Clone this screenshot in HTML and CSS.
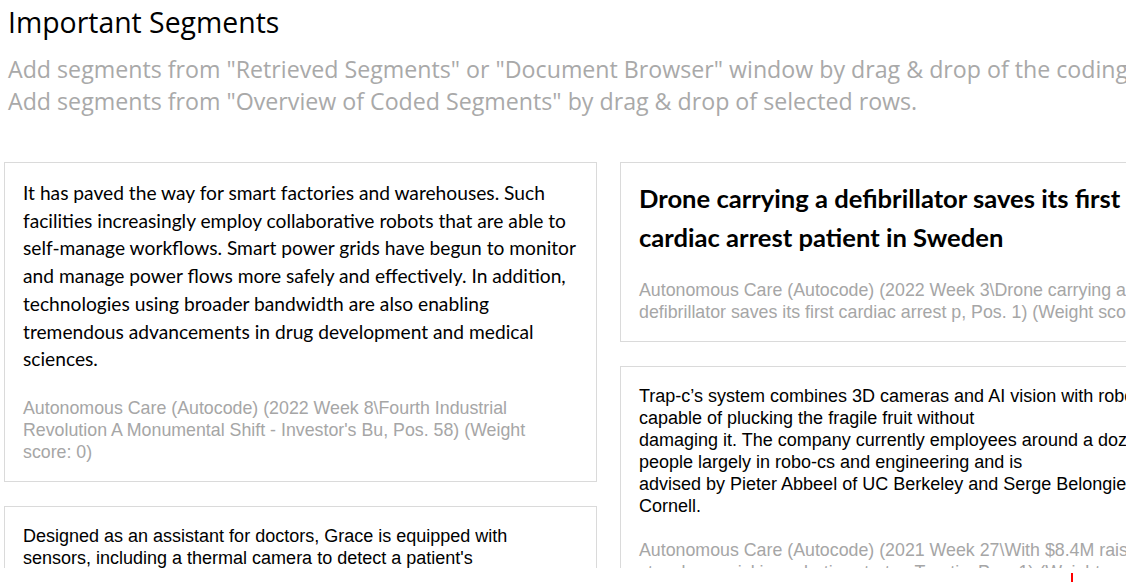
FILE: index.html
```html
<!DOCTYPE html>
<html lang="en">
<head>
    <meta charset="UTF-8">
    <meta name="viewport" content="width=device-width, initial-scale=1.0">
    <title>Important Segments</title>
    <link rel="stylesheet" href="styles.css">
</head>
<body>
    <div class="panel">
        <h1>Important Segments</h1>
        <p class="hint">
            Add segments from "Retrieved Segments" or "Document Browser" window by drag &amp; drop of the coding stripe.<br>
            Add segments from "Overview of Coded Segments" by drag &amp; drop of selected rows.
        </p>

        <div class="board">
            <div class="column">
                <div class="segment">
                    <p class="seg-text rich">It has paved the way for smart factories and warehouses. Such facilities increasingly employ collaborative robots that are able to self-manage workflows. Smart power grids have begun to monitor and manage power flows more safely and effectively. In addition, technologies using broader bandwidth are also enabling tremendous advancements in drug development and medical sciences.</p>
                    <p class="seg-source">Autonomous Care (Autocode) (2022 Week 8\Fourth Industrial Revolution A Monumental Shift - Investor's Bu, Pos. 58) (Weight score: 0)</p>
                </div>
                <div class="segment">
                    <p class="seg-text lines">Designed as an assistant for doctors, Grace is equipped with<br>
                    sensors, including a thermal camera to detect a patient's<br>
                    temperature and pulse, and can communicate in English,<br>
                    Mandarin and Cantonese.</p>
                    <p class="seg-source">Autonomous Care (Autocode) (2021 Week 34\Meet Grace, a healthcare robot, Pos. 3) (Weight score: 0)</p>
                </div>
            </div>
            <div class="column">
                <div class="segment">
                    <h2 class="seg-title">Drone carrying a defibrillator saves its first cardiac arrest patient in Sweden</h2>
                    <p class="seg-source">Autonomous Care (Autocode) (2022 Week 3\Drone carrying a defibrillator saves its first cardiac arrest p, Pos. 1) (Weight score: 0)</p>
                </div>
                <div class="segment">
                    <p class="seg-text lines">Trap-c’s system combines 3D cameras and AI vision with robo-c arms<br>
                    capable of plucking the fragile fruit without<br>
                    damaging it. The company currently employees around a dozen<br>
                    people largely in robo-cs and engineering and is<br>
                    advised by Pieter Abbeel of UC Berkeley and Serge Belongie of<br>
                    Cornell.</p>
                    <p class="seg-source">Autonomous Care (Autocode) (2021 Week 27\With $8.4M raised, strawberry-picking robotics startup Traptic, Pos. 1) (Weight score: 0)</p>
                </div>
            </div>
        </div>
    </div>
    <div class="caret"></div>
</body>
</html>
```

FILE: styles.css
```css
body {
    margin: 0;
    width: 1126px;
    height: 582px;
    overflow: hidden;
    background-color: #fff;
    position: relative;
}
.panel {
    height: 568px;
    overflow: hidden;
    font-family: "Open Sans", sans-serif;
}
h1 {
    margin: 0;
    padding: 2px 8px 0;
    font-size: 28.4px;
    font-weight: 400;
    line-height: 40px;
    color: #000;
    white-space: nowrap;
}
.hint {
    margin: 11px 0 0;
    padding: 0 8px;
    font-size: 23.2px;
    line-height: 32px;
    color: #a9a9a9;
    white-space: nowrap;
}
.board {
    display: flex;
    gap: 23px;
    margin-top: 45px;
    padding-left: 4px;
    align-items: flex-start;
}
.column {
    width: 593px;
    flex-shrink: 0;
    display: flex;
    flex-direction: column;
    gap: 24px;
}
.segment {
    border: 1px solid #dadada;
    padding: 18px;
    overflow: hidden;
}
.seg-text {
    margin: 0;
    font-family: "Liberation Sans", Arial, sans-serif;
    font-size: 18px;
    line-height: 22px;
    color: #000;
}
/* text copied from PDFs keeps its own line breaks */
.seg-text.lines {
    white-space: nowrap;
}
.seg-text.rich {
    margin-top: -2px;
    font-family: Lato, sans-serif;
    font-size: 19.2px;
    line-height: 27.7px;
}
.seg-title {
    margin: -2px 0 0;
    font-family: Lato, sans-serif;
    font-size: 25.6px;
    font-weight: 700;
    line-height: 39px;
    color: #000;
}
.seg-source {
    margin: 22px 0 0;
    font-family: "Liberation Sans", Arial, sans-serif;
    font-size: 17.8px;
    line-height: 22px;
    color: #a6a6a6;
}
.rich + .seg-source {
    margin-top: 24px;
}
.caret {
    position: absolute;
    left: 1071px;
    top: 573px;
    width: 2px;
    height: 9px;
    background-color: #f00;
}
```
